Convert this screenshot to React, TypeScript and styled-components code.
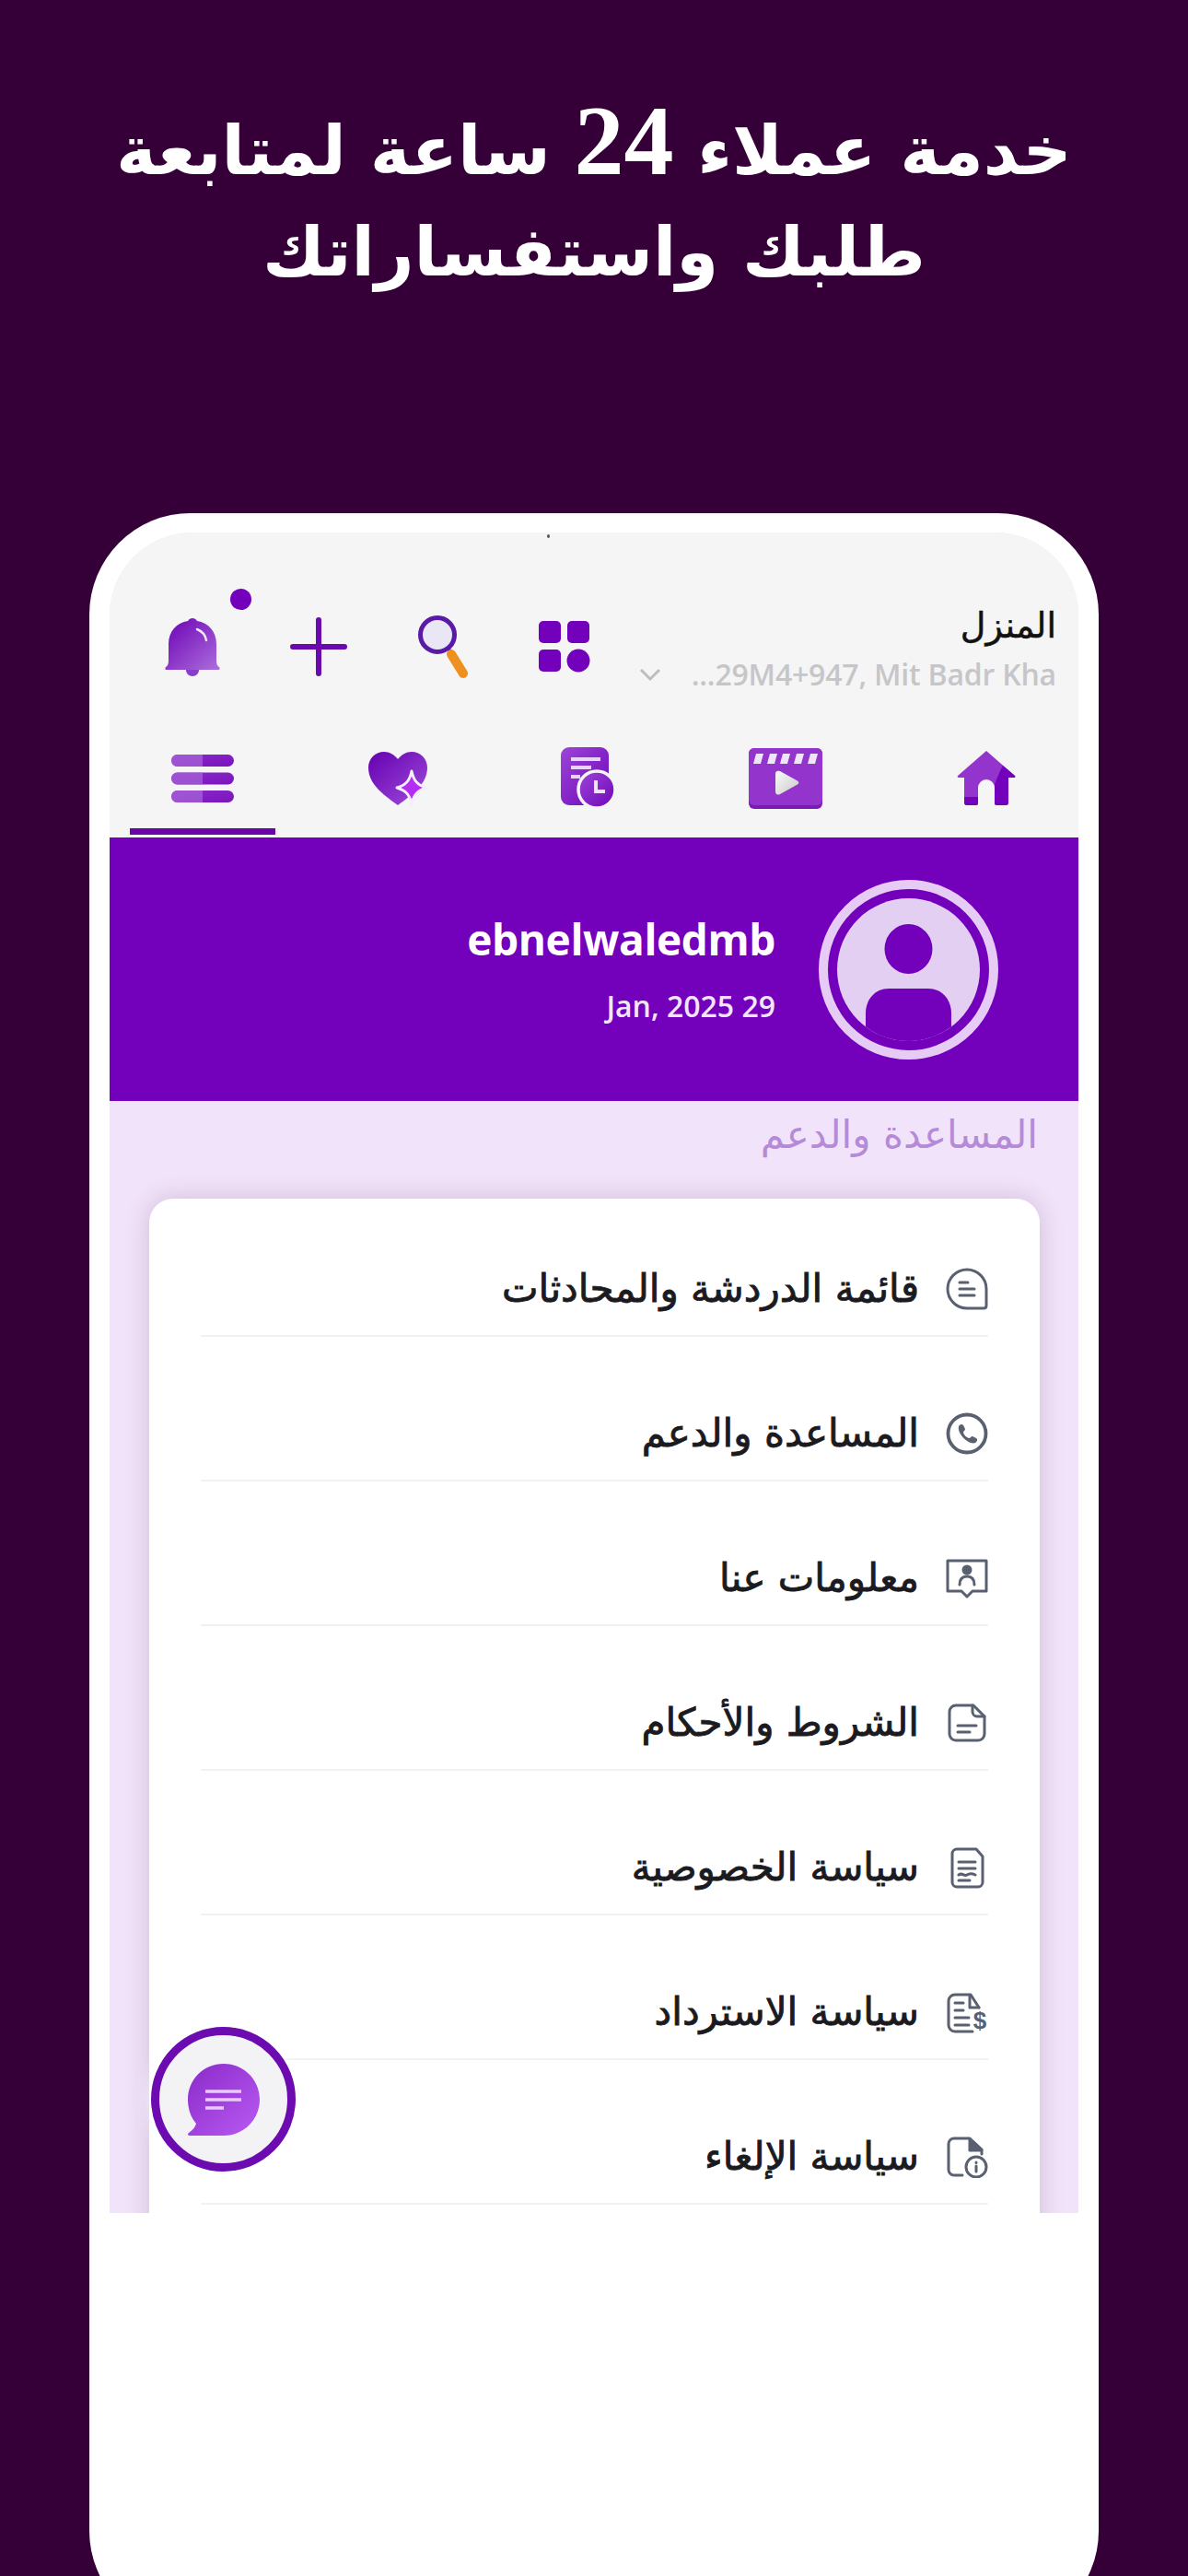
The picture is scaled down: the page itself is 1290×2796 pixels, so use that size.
import React from "react"
import styled, { createGlobalStyle } from "styled-components"

const GlobalStyle = createGlobalStyle`
  html, body {
    margin: 0;
    padding: 0;
    background: #350038;
  }
`

const arabic = `"DejaVu Sans", "Noto Sans", sans-serif`

const Page = styled.div`
  width: 1290px;
  height: 2796px;
  overflow: hidden;
  background: #350038;
  display: flex;
  flex-direction: column;
  align-items: center;
`

const Title = styled.h1`
  flex: none;
  margin: 0;
  height: 557px;
  width: 100%;
  padding-top: 108px;
  box-sizing: border-box;
  direction: rtl;
  text-align: center;
  color: #fff;
  font-family: "DejaVu Sans", serif;
  font-size: 74px;
  line-height: 110px;
  font-weight: 700;
`

const TitleDigits = styled.span`
  font-family: "Liberation Serif", serif;
  font-size: 108px;
  line-height: 0;
`

const Frame = styled.div`
  flex: none;
  width: 1096px;
  height: 2300px;
  box-sizing: border-box;
  padding: 21px 22px 0 22px;
  background: #fff;
  border-radius: 110px;
`

const Screen = styled.div`
  position: relative;
  height: 1824px;
  overflow: hidden;
  border-radius: 90px 90px 0 0;
  background: #f1e3f9;
  display: flex;
  flex-direction: column;
`

const CameraDot = styled.span`
  position: absolute;
  top: 2px;
  left: 475px;
  width: 3px;
  height: 4px;
  border-radius: 50%;
  background: #555;
`

const Header = styled.header`
  background: #f5f5f5;
  height: 331px;
  flex: none;
  box-sizing: border-box;
  padding-top: 89px;
`

const TopBar = styled.div`
  height: 70px;
  display: flex;
  align-items: center;
  justify-content: space-between;
  padding: 0 24px 0 60px;
`

const Actions = styled.div`
  display: flex;
  align-items: center;
  gap: 76px;
`

const ActionIcon = styled.span`
  position: relative;
  display: block;
  line-height: 0;
`

const NotifyDot = styled.span`
  position: absolute;
  top: -30px;
  left: 71px;
  width: 23px;
  height: 23px;
  border-radius: 50%;
  background: #7300bb;
`

const Location = styled.div`
  display: flex;
  flex-direction: column;
  align-items: flex-end;
  gap: 14px;
  margin-top: 6px;
`

const LocationName = styled.div`
  font-family: ${arabic};
  font-size: 38px;
  line-height: 40px;
  font-weight: 400;
  color: #111;
  direction: rtl;
  -webkit-text-stroke: 0.5px #111;
`

const AddressRow = styled.div`
  display: flex;
  align-items: center;
  gap: 33px;
`

const Address = styled.div`
  font-family: "Open Sans", sans-serif;
  font-size: 32px;
  line-height: 38px;
  font-weight: 600;
  letter-spacing: -0.2px;
  color: #c6c6c8;
`

const Tabs = styled.nav`
  margin-top: 74px;
  display: grid;
  grid-template-columns: 202px 222px 192px 236px 200px;
`

const Tab = styled.div`
  display: flex;
  flex-direction: column;
  align-items: center;
`

const TabIcon = styled.div`
  height: 68px;
  display: flex;
  align-items: center;
  justify-content: center;
`

const TabLine = styled.div`
  width: 158px;
  height: 7px;
  margin-top: 20px;
  background: #6a06a8;
`

const Banner = styled.section`
  flex: none;
  height: 286px;
  background: #7300bb;
  display: flex;
  align-items: center;
  justify-content: flex-end;
  gap: 47px;
  padding-right: 87px;
`

const UserInfo = styled.div`
  display: flex;
  flex-direction: column;
  align-items: flex-end;
  gap: 24px;
  margin-top: -4px;
  color: #fff;
`

const UserName = styled.div`
  font-family: "Open Sans", sans-serif;
  font-size: 46px;
  line-height: 60px;
  font-weight: 700;
  letter-spacing: -0.4px;
`

const UserDate = styled.div`
  font-family: "Open Sans", sans-serif;
  font-size: 32px;
  line-height: 38px;
  font-weight: 600;
  color: #f2e6fa;
`

const SectionTitle = styled.h2`
  margin: 0;
  padding: 15px 44px 0 0;
  height: 106px;
  flex: none;
  box-sizing: border-box;
  direction: rtl;
  font-family: ${arabic};
  font-size: 42px;
  line-height: 44px;
  font-weight: 400;
  color: #b58ad6;
`

const Card = styled.div`
  margin: 0 42px 0 43px;
  flex: none;
  padding: 0 56px 60px;
  background: #fff;
  border-radius: 26px;
  box-shadow: 0 0 26px rgba(90, 50, 120, 0.22);
`

const Row = styled.div`
  height: 157px;
  box-sizing: border-box;
  padding-bottom: 27px;
  border-bottom: 2px solid #f1f1f1;
  direction: rtl;
  display: flex;
  align-items: flex-end;
  gap: 29px;

  &:first-child {
    height: 150px;
  }
`

const RowIcon = styled.span`
  flex: none;
  width: 46px;
  height: 46px;
  line-height: 0;
`

const RowLabel = styled.span`
  font-family: ${arabic};
  font-size: 42px;
  line-height: 46px;
  font-weight: 400;
  color: #1b1b1f;
  -webkit-text-stroke: 0.9px #1b1b1f;
`

const ChatButton = styled.div`
  position: absolute;
  left: 45px;
  top: 1622px;
  width: 157px;
  height: 157px;
  box-sizing: border-box;
  border: 9px solid #6c0bb0;
  border-radius: 50%;
  background: #f3f3f5;
  box-shadow: 0 0 20px rgba(255, 255, 255, 0.9);
  display: flex;
  align-items: center;
  justify-content: center;
`

const Grad = ({ id, from, to }: { id: string; from: string; to: string }) => (
  <defs>
    <linearGradient id={id} x1="0" y1="0" x2="1" y2="1">
      <stop offset="0" stopColor={from} />
      <stop offset="1" stopColor={to} />
    </linearGradient>
  </defs>
)

const BellIcon = () => (
  <svg width="60" height="66" viewBox="0 0 60 66">
    <Grad id="bell" from="#6a00b5" to="#ad6fdc" />
    <path d="M23 58h14c0 4-3 7-7 7s-7-3-7-7Z" fill="#8a3ccb" />
    <path d="M30 2c2 0 4 1 5 3 12 2 21 11 21 25v17c0 5 1 7 3 8 1 1 1 3-1 3H2c-2 0-2-2-1-3 2-1 3-3 3-8V30C4 16 13 7 25 5c1-2 3-3 5-3Z" fill="url(#bell)" />
    <path d="M35 14c5 2 9 6 10 12" stroke="#f2e8fa" strokeWidth="2.500" fill="none" strokeLinecap="round" />
  </svg>
)

const PlusIcon = () => (
  <svg width="62" height="64" viewBox="0 0 62 64">
    <path d="M31 3v58M3 32h56" stroke="#6a0aae" strokeWidth="6" strokeLinecap="round" />
  </svg>
)

const SearchIcon = () => (
  <svg width="56" height="70" viewBox="0 0 56 70">
    <circle cx="22" cy="22" r="18.500" fill="#e9e7f6" stroke="#5a1aa8" strokeWidth="5" />
    <path d="M33 39l3-2" stroke="#5a1aa8" strokeWidth="6" />
    <path d="M37 43l13 21" stroke="#ee8f1e" strokeWidth="10" strokeLinecap="round" />
  </svg>
)

const AppsIcon = () => (
  <svg width="56" height="56" viewBox="0 0 56 56">
    <rect x="0" y="0" width="24" height="24" rx="5" fill="#7300bb" />
    <rect x="31" y="0" width="24" height="24" rx="5" fill="#7300bb" />
    <rect x="0" y="31" width="24" height="24" rx="5" fill="#7300bb" />
    <circle cx="43" cy="43" r="12.500" fill="#7300bb" />
  </svg>
)

const Chevron = () => (
  <svg width="24" height="15" viewBox="0 0 24 15">
    <path d="M2 2l10 10L22 2" stroke="#bdbdbd" strokeWidth="3" fill="none" />
  </svg>
)

const MenuIcon = () => (
  <svg width="68" height="52" viewBox="0 0 68 52">
    <Grad id="menu" from="#8a2bc9" to="#7a14bd" />
    {[0, 19.500, 39].map((y) => (
      <g key={y}>
        <rect x="0" y={y} width="68" height="13" rx="6.500" fill="url(#menu)" />
        <path d={`M6.500 ${y}H34V${y + 13}H6.500a6.500 6.500 0 0 1 0-13Z`} fill="#a563d6" opacity="0.75" />
      </g>
    ))}
  </svg>
)

const HeartIcon = () => (
  <svg width="66" height="60" viewBox="0 0 66 60">
    <Grad id="heart" from="#6500b0" to="#a04ddb" />
    <path d="M33 59C15 46 1 35 1 18 1 8 9 1 18 1c6 0 11 3 15 8 4-5 9-8 15-8 9 0 17 7 17 17 0 17-14 28-32 41Z" fill="url(#heart)" />
    <path d="M48 22c2 10 6 15 16 18-10 3-14 8-16 18-2-10-6-15-16-18 10-3 14-8 16-18Z" fill="#b52cf5" stroke="#f5eefb" strokeWidth="3" strokeLinejoin="round" />
  </svg>
)

const OrdersIcon = () => (
  <svg width="60" height="68" viewBox="0 0 60 68">
    <Grad id="orders" from="#9c45d8" to="#6f06b8" />
    <rect x="0" y="0" width="52" height="63" rx="9" fill="url(#orders)" />
    <path d="M11 13h32M11 22h22M11 32h10" stroke="#e8d4f6" strokeWidth="4" />
    <circle cx="39" cy="46" r="20" fill="url(#orders)" stroke="#f5f5f5" strokeWidth="3.500" />
    <path d="M38 36v12h10" stroke="#efe3f8" strokeWidth="4" fill="none" />
  </svg>
)

const VideoIcon = () => (
  <svg width="80" height="66" viewBox="0 0 80 66">
    <Grad id="play" from="#fafafa" to="#c9c9c9" />
    <rect x="0" y="0" width="80" height="66" rx="6" fill="#7a1bb8" />
    <rect x="0" y="0" width="80" height="62" rx="6" fill="#9335cd" />
    {[5, 20, 34, 49, 64].map((x) => (
      <path key={x} d={`M${x + 3} 6h8l-3 11h-8Z`} fill="#efe4f8" />
    ))}
    <path d="M29 28c0-3 2-4 5-3l18 10c3 1.500 3 3.500 0 5L34 50c-3 1.500-5 0-5-3Z" fill="url(#play)" />
  </svg>
)

const HomeIcon = () => (
  <svg width="64" height="60" viewBox="0 0 64 60">
    <path d="M32 0 63 27c1 1 0 2-1 2h-6v27c0 2-1 3-3 3H43c-1 0-2-1-2-2V40a9 9 0 0 0-18 0v17c0 1-1 2-2 2H11c-2 0-3-1-3-3V29H2c-1 0-2-1-1-2L32 0Z" fill="#9335cd" />
    <path d="M50 16 63 27c1 1 0 2-1 2h-6v27c0 2-1 3-3 3H43c-1 0-2-1-2-2V36c3-7 5-13 9-20Z" fill="#7300bb" />
    <path d="M8 50h15v7c0 1-1 2-2 2H11c-2 0-3-1-3-3Z" fill="#7300bb" />
  </svg>
)

const AvatarIcon = () => (
  <svg width="195" height="195" viewBox="0 0 195 195">
    <circle cx="97.500" cy="97.500" r="92.500" fill="none" stroke="#e6ccf5" strokeWidth="10" />
    <circle cx="97.500" cy="97.500" r="77.500" fill="#e3cff1" />
    <ellipse cx="97.500" cy="75" rx="26" ry="27" fill="#7300bb" />
    <path d="M51 159.500V145c0-15 10-27 25-27h43c15 0 25 12 25 27v14.500a77.500 77.500 0 0 1-93 0Z" fill="#7300bb" />
  </svg>
)

const BubbleIcon = () => (
  <svg width="80" height="80" viewBox="0 0 80 80">
    <Grad id="bubble" from="#8a2bc9" to="#b95af3" />
    <path d="M40 1c21 0 39 17 39 39S61 79 40 79H3c-2 0-3-1-1-3 4-3 7-6 8-10C4 59 1 50 1 40 1 18 18 1 40 1Z" fill="url(#bubble)" />
    <path d="M20 31h39M20 40h39M20 49h20" stroke="#e8c9fb" strokeWidth="3.500" />
  </svg>
)

const stroke = { fill: "none", stroke: "#596070", strokeWidth: 3, strokeLinecap: "round", strokeLinejoin: "round" } as const

const rowIcons = [
  <svg width="46" height="46" viewBox="0 0 46 46" {...stroke}>
    <path d="M23 2a21 21 0 1 0 0 42h18c2 0 3-1 3-3V23A21 21 0 0 0 23 2Z" />
    <path d="M15 16h9M15 23h16M15 30h16" />
  </svg>,
  <svg width="46" height="46" viewBox="0 0 46 46" {...stroke} strokeWidth={3.8}>
    <circle cx="23" cy="23" r="20.500" />
    <path d="M14 15c1-2 4-3 5-1l2 4c0 2-2 2-2 4 1 3 3 5 6 6 2 0 2-2 4-2l4 2c2 1 1 4-1 5-6 3-20-9-18-18Z" fill="#596070" stroke="none" />
  </svg>,
  <svg width="46" height="46" viewBox="0 0 46 46" {...stroke}>
    <path d="M2 4h42v33H29l-6 6-6-6H2Z" />
    <circle cx="23" cy="14" r="4" fill="#596070" />
    <path d="M15 30c0-6 3-9 8-9s8 3 8 9" />
  </svg>,
  <svg width="46" height="46" viewBox="0 0 46 46" {...stroke}>
    <path d="M30 4H11a7 7 0 0 0-7 7v24a7 7 0 0 0 7 7h24a7 7 0 0 0 7-7V16Z" />
    <path d="M29 4v7a5 5 0 0 0 5 5h8M13 26h20M13 33h13" />
  </svg>,
  <svg width="46" height="46" viewBox="0 0 46 46" {...stroke}>
    <path d="M33 3H12a5 5 0 0 0-5 5v31a5 5 0 0 0 5 5h23a5 5 0 0 0 5-5V11Z" />
    <path d="M14 17h18M14 24h18M14 31c4-3 6 2 9 0s5-2 9 0M14 37h12" />
  </svg>,
  <svg width="46" height="46" viewBox="0 0 46 46" {...stroke}>
    <path d="M36 18l-9-14H10a7 7 0 0 0-7 7v26a7 7 0 0 0 7 7h19" />
    <path d="M26 5v13h10M10 13h9M10 21h9M10 29h15M10 37h15" />
    <text x="37" y="41" fontFamily='"Liberation Sans", sans-serif' fontSize="26" fontWeight="700" textAnchor="middle" fill="#596070" stroke="none">$</text>
  </svg>,
  <svg width="46" height="46" viewBox="0 0 46 46" {...stroke}>
    <path d="M18 43h-9a6 6 0 0 1-6-6V9a6 6 0 0 1 6-6h17l13 12v5" />
    <path d="M26 4l13 12H26Z" fill="#596070" />
    <circle cx="33" cy="34" r="11" />
    <path d="M33 33v6M33 29v.5" />
  </svg>,
]

const items = [
  "قائمة الدردشة والمحادثات",
  "المساعدة والدعم",
  "معلومات عنا",
  "الشروط والأحكام",
  "سياسة الخصوصية",
  "سياسة الاسترداد",
  "سياسة الإلغاء",
]

const tabs = [<MenuIcon />, <HeartIcon />, <OrdersIcon />, <VideoIcon />, <HomeIcon />]

export default function App() {
  return (
    <Page>
      <GlobalStyle />
      <Title>
        خدمة عملاء <TitleDigits>24</TitleDigits> ساعة لمتابعة
        <br />
        طلبك واستفساراتك
      </Title>
      <Frame>
        <Screen>
          <CameraDot />
          <Header>
            <TopBar>
              <Actions>
                <ActionIcon>
                  <BellIcon />
                  <NotifyDot />
                </ActionIcon>
                <ActionIcon>
                  <PlusIcon />
                </ActionIcon>
                <ActionIcon>
                  <SearchIcon />
                </ActionIcon>
                <ActionIcon>
                  <AppsIcon />
                </ActionIcon>
              </Actions>
              <Location>
                <LocationName>المنزل</LocationName>
                <AddressRow>
                  <Chevron />
                  <Address>...29M4+947, Mit Badr Kha</Address>
                </AddressRow>
              </Location>
            </TopBar>
            <Tabs>
              {tabs.map((icon, i) => (
                <Tab key={i}>
                  <TabIcon>{icon}</TabIcon>
                  {i === 0 && <TabLine />}
                </Tab>
              ))}
            </Tabs>
          </Header>
          <Banner>
            <UserInfo>
              <UserName>ebnelwaledmb</UserName>
              <UserDate>Jan, 2025 29</UserDate>
            </UserInfo>
            <AvatarIcon />
          </Banner>
          <SectionTitle>المساعدة والدعم</SectionTitle>
          <Card>
            {items.map((label, i) => (
              <Row key={label}>
                <RowIcon>{rowIcons[i]}</RowIcon>
                <RowLabel>{label}</RowLabel>
              </Row>
            ))}
          </Card>
          <ChatButton>
            <BubbleIcon />
          </ChatButton>
        </Screen>
      </Frame>
    </Page>
  )
}
